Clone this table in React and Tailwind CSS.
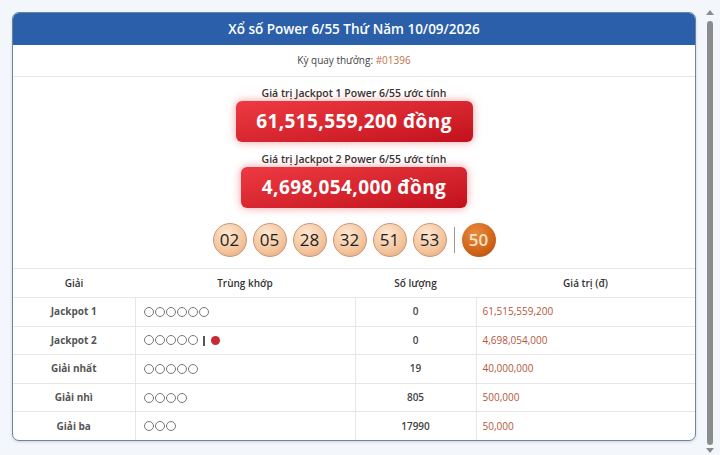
import React from 'react';

const balls = ['02', '05', '28', '32', '51', '53'];

const prizes = [
  { name: 'Jackpot 1', match: 6, extra: false, count: '0', value: '61,515,559,200' },
  { name: 'Jackpot 2', match: 5, extra: true, count: '0', value: '4,698,054,000' },
  { name: 'Giải nhất', match: 5, extra: false, count: '19', value: '40,000,000' },
  { name: 'Giải nhì', match: 4, extra: false, count: '805', value: '500,000' },
  { name: 'Giải ba', match: 3, extra: false, count: '17990', value: '50,000' },
];

function Circles({ n, extra }) {
  return (
    <div className="flex items-center gap-[1px]">
      {Array.from({ length: n }).map((_, i) => (
        <span key={i} className="w-[10px] h-[10px] rounded-full border border-[#777] bg-white" />
      ))}
      {extra && (
        <>
          <span className="ml-[4px] mr-[5px] w-[2px] h-[10px] bg-[#555] translate-y-[1px]" />
          <span className="w-[9px] h-[9px] rounded-full bg-[#c92a35]" />
        </>
      )}
    </div>
  );
}

function JackpotBox({ label, amount, width }) {
  return (
    <div className="flex flex-col items-center">
      <p className="text-[10.5px] leading-[16px] font-semibold text-[#333]">{label}</p>
      <div
        className={`${width} h-[41px] flex items-center justify-center rounded-[6px] bg-gradient-to-br from-[#ee3942] to-[#c20f1c] shadow-[0_0_8px_rgba(230,60,70,0.5)]`}
      >
        <span className="text-white text-[19px] font-bold tracking-[0.4px]">{amount}</span>
      </div>
    </div>
  );
}

export default function App() {
  return (
    <div className="w-[720px] h-[455px] bg-[#f3f6fa] flex overflow-hidden" style={{ fontFamily: '"Open Sans", "Noto Sans", sans-serif' }}>
      <div className="flex-1 pl-3 pr-1 pt-3">
        <div className="bg-white rounded-[7px] border border-[#6a87a2] shadow-[0_1px_3px_rgba(0,0,0,0.15)] overflow-hidden">
          <div className="h-[32px] bg-[#2b5fa9] flex items-center justify-center">
            <h1 className="text-white text-[13.5px] font-semibold">Xổ số Power 6/55 Thứ Năm 10/09/2026</h1>
          </div>

          <div className="h-[32px] flex items-center justify-center border-b border-[#e6e6e6] text-[10px] text-[#444]">
            Kỳ quay thưởng:&nbsp;<span className="text-[#c4714c]">#01396</span>
          </div>

          <div className="flex flex-col items-center pt-[8px] pb-[11px]">
            <JackpotBox label="Giá trị Jackpot 1 Power 6/55 ước tính" amount="61,515,559,200 đồng" width="w-[237px]" />
            <div className="h-[9px]" />
            <JackpotBox label="Giá trị Jackpot 2 Power 6/55 ước tính" amount="4,698,054,000 đồng" width="w-[226px]" />

            <div className="mt-[15px] flex items-center gap-[6px]">
              {balls.map((b) => (
                <div
                  key={b}
                  className="w-[34px] h-[34px] rounded-full border border-[#c9977a] bg-[radial-gradient(circle_at_40%_30%,#fde6d0,#f3c49c_60%,#e5a57a)] flex items-center justify-center text-[17px] text-[#1f1f1f]"
                >
                  {b}
                </div>
              ))}
              <span className="w-[1px] h-[26px] bg-[#9a9a9a] mx-[1px]" />
              <div className="w-[34px] h-[34px] rounded-full bg-[radial-gradient(circle_at_40%_30%,#e98a3c,#cf6418_60%,#a9490f)] flex items-center justify-center text-[17px] font-semibold text-[#f8e3c4]">
                50
              </div>
            </div>
          </div>

          <table className="w-full border-collapse text-[10px] table-fixed">
            <colgroup>
              <col className="w-[122px]" />
              <col className="w-[220px]" />
              <col className="w-[121px]" />
              <col />
            </colgroup>
            <thead>
              <tr className="h-[29px] border-t border-[#e6e6e6]">
                <th className="font-semibold text-[#333] text-center">Giải</th>
                <th className="font-semibold text-[#333] text-center">Trùng khớp</th>
                <th className="font-semibold text-[#333] text-center">Số lượng</th>
                <th className="font-semibold text-[#333] text-center">Giá trị (đ)</th>
              </tr>
            </thead>
            <tbody>
              {prizes.map((p) => (
                <tr key={p.name} className="h-[28.6px] border-t border-[#e6e6e6]">
                  <td className="text-center font-bold text-[#555]">{p.name}</td>
                  <td className="border-l border-[#e6e6e6] pl-[8px]">
                    <Circles n={p.match} extra={p.extra} />
                  </td>
                  <td className="border-l border-[#e6e6e6] text-center font-semibold text-[#444]">{p.count}</td>
                  <td className="border-l border-[#e6e6e6] pl-[6px] text-[#b4563b]">{p.value}</td>
                </tr>
              ))}
            </tbody>
          </table>
        </div>
      </div>

      <div className="w-[20px] flex flex-col items-center pt-[10px] pb-[2px]">
        <span className="w-0 h-0 border-l-[4px] border-r-[4px] border-b-[5px] border-l-transparent border-r-transparent border-b-[#8c8c8c]" />
        <div className="mt-[6px] flex-1 w-[6px] rounded-full bg-[#8c8c8c]" />
        <span className="mt-[3px] w-0 h-0 border-l-[4px] border-r-[4px] border-t-[5px] border-l-transparent border-r-transparent border-t-[#8c8c8c]" />
      </div>
    </div>
  );
}
